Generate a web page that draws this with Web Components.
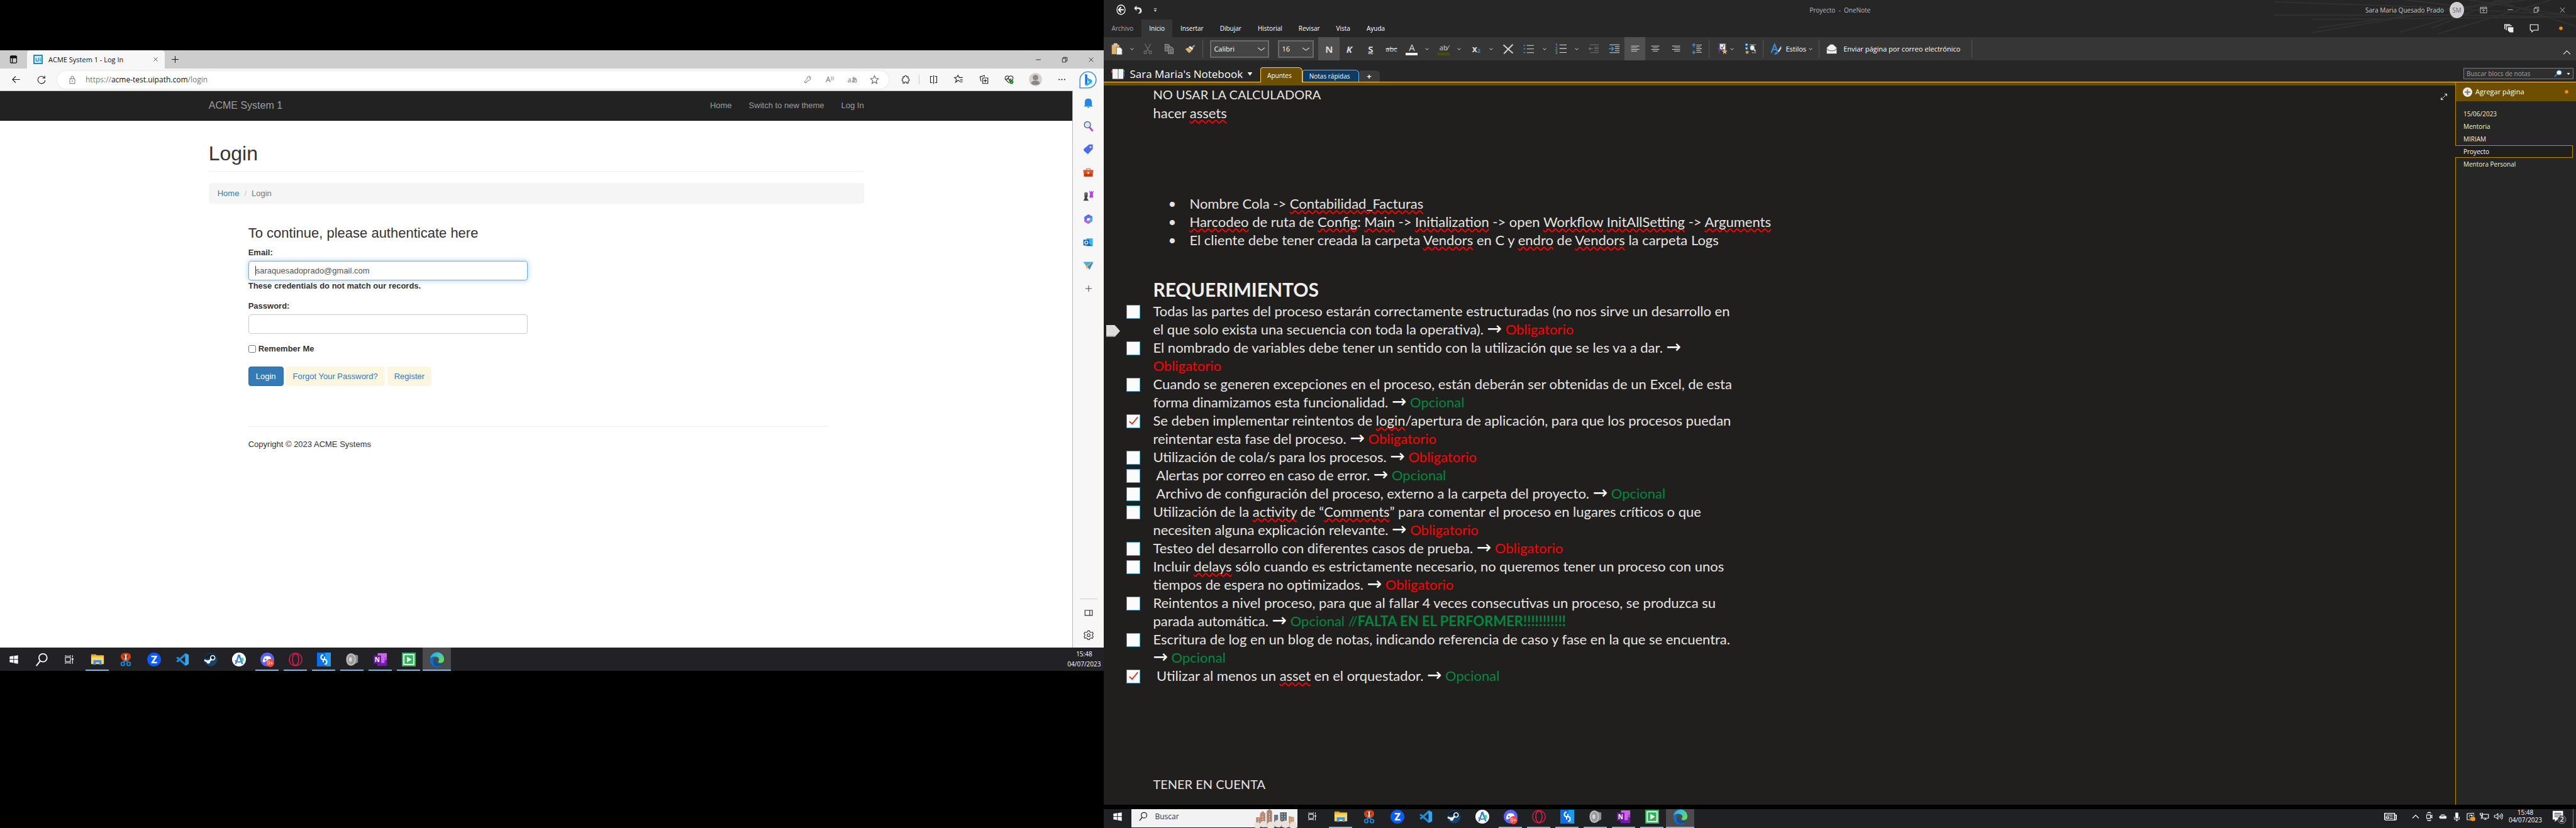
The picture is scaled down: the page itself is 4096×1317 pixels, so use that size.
<!DOCTYPE html>
<html lang="es">
<head>
<meta charset="utf-8">
<title>Escritorio</title>
<style>
  html, body { margin: 0; height: 100%; background: #000; }
  body { font-family: "Open Sans", "Noto Sans", sans-serif; overflow: hidden; }
</style>
</head>
<body>
<dual-desktop></dual-desktop>
<script>
const BASE = `
  *, *::before, *::after { box-sizing: border-box; }
  button { font: inherit; color: inherit; background: none; border: 0; padding: 0; margin: 0; display: flex; align-items: center; justify-content: center; }
  a { color: inherit; text-decoration: none; }
  p, h1, h2, h3, ul, ol { margin: 0; padding: 0; font-weight: inherit; list-style: none; }
`;
function define(name, css, html) {
  const t = document.createElement('template');
  t.innerHTML = '<style>' + BASE + css + '</style>' + html;
  customElements.define(name, class extends HTMLElement {
    constructor() { super(); this.attachShadow({ mode: 'open' }).append(t.content.cloneNode(true)); }
  });
}

/* ---------- icons ---------- */
const st = (d, w = 1.6, x = '') => `<path d="${d}" fill="none" stroke="currentColor" stroke-width="${w}" ${x}/>`;
const BLUE = '#3a86d8';
const ICONS = {
  workspaces: st('M4 6a3 3 0 0 1 3-3h10a3 3 0 0 1 3 3v12a3 3 0 0 1-3 3H7a3 3 0 0 1-3-3zM9 8v13M4 8h16', 2) + '<path d="M4 3h16v5H4z" fill="currentColor"/>',
  close: st('M4 4l16 16M20 4L4 20', 1.8),
  plus: st('M12 2v20M2 12h20', 1.8),
  back: st('M22 12H3M11 4l-8 8 8 8', 1.8),
  reload: st('M20 6a10 10 0 1 0 2 7M21 1v6h-6', 1.9),
  lock: st('M4 9h16v13H4zM8 9V6a4 4 0 0 1 8 0v3', 1.7) + '<circle cx="12" cy="15.500" r="1.600" fill="currentColor"/>',
  key: st('M15 2a6.500 6.500 0 0 1 2 12l-5 1-2 3H8v3H3v-4l7-7a6.500 6.500 0 0 1 5-8z', 1.6) + '<circle cx="17" cy="7" r="1.500" fill="currentColor"/>',
  star: st('M12 2l3 7 7 .700-5.500 5 1.800 7.300-6.300-4-6.300 4L7.500 14.700 2 9.700 9 9z', 1.7),
  puzzle: st('M5 5h4a3 3 0 0 1 6 0h4v5a3 3 0 0 1 0 6v5h-4a3 3 0 0 0-6 0H5v-5a3 3 0 0 1 0-6z', 1.9),
  split: st('M9 4H4v16h5M15 4h5v16h-5M12 1v22', 1.8),
  favs: st('M15 17l-5-3-6 5 2-8-5-4 6-1 3-5 3 6h9M15 13h7M15 18h7', 1.8),
  collections: st('M9 8h13v14H9zM15.500 11v8M11.500 15h8M5 17L2 5l11-3 1 3', 1.8),
  heart: st('M12 21L3 12a5.500 5.500 0 0 1 9-7 5.500 5.500 0 0 1 9 7l-2 2M3 11h5l2-4 3 8 2-4h3', 1.8) + '<circle cx="18" cy="18" r="5" fill="#107c10"/><path d="M16 18l2 2 3-4" stroke="#fff" fill="none"/>',
  avatar: '<circle cx="12" cy="12" r="12" fill="#d5d2ce"/><circle cx="12" cy="8.500" r="5" fill="#8a8886"/><path d="M4 19a8 5 0 0 1 16 0 12 12 0 0 1-16 0z" fill="#8a8886"/>',
  dots: '<g fill="currentColor"><circle cx="4" cy="12" r="2"/><circle cx="12" cy="12" r="2"/><circle cx="20" cy="12" r="2"/></g>',
  bing: '<path d="M1 23V12A11 11 0 1 1 12 23z" fill="#fff" stroke="#2f7fe8" stroke-width="1.200"/><path d="M8 4l3 1v12l-3 2z" fill="#1b6fe8"/><path d="M11 9l6 3q2 3-1 5l-5 3q-2 0-3-1l6-4-2-1z" fill="#25b0ee"/>',
  minimize: st('M3 12h18', 2),
  restore: st('M3 7h13v14H3zM7 7V3h14v14h-5', 2),
  bell: '<path d="M12 1c6 0 8 4 8 9v7l2 2H2l2-2v-7c0-5 2-9 8-9z" fill="#1f8ae8"/><path d="M9 20h6l-3 3z" fill="#777"/>',
  lens: '<path d="M14 14l7 8" stroke="#c13ae0" stroke-width="4" stroke-linecap="round"/><circle cx="10" cy="9" r="7" fill="#cfe8fb" stroke="#666" stroke-width="2"/>',
  tag: '<path d="M14 1h8v10L11 23 2 15q-1-2 0-4z" fill="#4a6cf5"/><circle cx="17" cy="7" r="2.500" fill="#ffd14a"/>',
  toolbox: '<path d="M8 6V3h8v3" stroke="#999" stroke-width="2" fill="none"/><path d="M1 6h22v7H1z" fill="#e0551f"/><path d="M2 13h20v8H2z" fill="#c23b12"/><path d="M10 10h4v5h-4z" fill="#ddd"/>',
  chess: '<path d="M14 1h2v2h2V1h2v2h2V1h2l-2 7 1 8h-9l2-8z" fill="#b63ff0"/><circle cx="7" cy="8" r="4" fill="#666"/><path d="M3 11h8l-2 6 4 6H1l3-6z" fill="#444"/>',
  office: '<path d="M12 1l9 5v6l-6-3-6 3v5l-6-3V7z" fill="#5a6ef0"/><path d="M21 9v8l-9 6-9-5v-5l7 3 6-3V8z" fill="#b06bd8"/><path d="M16 7l5 3v6l-6 4z" fill="#38b6f0"/><path d="M12 9l3 2v3l-3 2-3-2v-3z" fill="#f7f7f7"/>',
  outlook: '<path d="M8 3h14v17H8z" fill="#35b8f1"/><path d="M8 12l14 8H8z" fill="#1066b8"/><rect x="1" y="6" width="13" height="13" fill="#0a5fb4"/><circle cx="7.500" cy="12.500" r="3.500" fill="none" stroke="#fff" stroke-width="2"/>',
  plane: '<path d="M1 4h22l-9 17-4-7z" fill="#2f9be8"/><path d="M1 4h22L8 14z" fill="#38b0f2"/><path d="M23 4L6 12l3 8 2-6z" fill="#f0a832"/><path d="M11 14L23 4l-8 16z" fill="#2f86e0"/>',
  panel: st('M2 5h20v15H2zM15 5v15', 2),
  gear: st('M10 2h4l1 3 3 1 3-1 2 4-2 2v3l2 2-2 4-3-1-3 1-1 3h-4l-1-3-3-1-3 1-2-4 2-2v-3L1 9l2-4 3 1 3-1z', 1.7) + '<circle cx="12" cy="12.500" r="3.500" fill="none" stroke="currentColor" stroke-width="1.700"/>',
  /* taskbar */
  windows: '<g fill="#fff"><path d="M2 5l9-1.500V11H2zM12.500 3.200L22 2v9h-9.500zM2 12.500h9V20l-9-1.500zM12.500 12.500H22V22l-9.500-1.500z"/></g>',
  search: '<circle cx="14.500" cy="9" r="7" fill="none" stroke="currentColor" stroke-width="2"/><path d="M10 14l-7 9" stroke="currentColor" stroke-width="2.200"/>',
  taskview: st('M3 7h12v10H3zM3 2v2h12V2M3 22v-2h12v2M20 2v5M20 14v8', 1.6) + '<rect x="18" y="9" width="4" height="4" fill="currentColor"/>',
  folder: '<path d="M1 3h8l2 2H1z" fill="#e8a317"/><path d="M1 5h22v15H1z" fill="#ffd667"/><path d="M1 5h22v3H1z" fill="#f5bd3c"/><path d="M5 13h14v8h-4v-4H9v4H5z" fill="#3f93dc"/>',
  snip: '<path d="M11 15C3 13 1 6 6 1c-1 3 3 6 5 9zM13 15c8-2 10-9 5-14 0 3-3 6-5 9z" fill="#d8420f"/><path d="M6 2q6-3 12 0l-2 4H8z" fill="#d8420f"/><path d="M12 3v12" stroke="#ddd" stroke-width="3"/><path d="M12 13l-4 4M12 13l4 4" stroke="#1a8ad8" stroke-width="2"/><circle cx="7" cy="19.500" r="3" fill="none" stroke="#1a8ad8" stroke-width="2"/><circle cx="17" cy="19.500" r="3" fill="none" stroke="#1a8ad8" stroke-width="2"/>',
  zed: '<circle cx="12" cy="12" r="12" fill="#0b5cff"/><text x="12" y="18" text-anchor="middle" font-family="Inter,sans-serif" font-weight="800" font-size="17" fill="#fff">Z</text>',
  vscode: '<path d="M17 1l6 3v16l-6 3L1 9l3-2 13 11V6L4 17l-3-2z" fill="#1f8ad2"/><path d="M17 1l6 3v16l-6 3z" fill="#35a6ee"/>',
  steam: '<circle cx="12" cy="12" r="11.500" fill="#13456e"/><path d="M1 10a11.500 11.500 0 0 1 22 0z" fill="#10202f"/><path d="M1 13l7 3 6-5" stroke="#fff" stroke-width="3" fill="none"/><circle cx="15.500" cy="9" r="3.800" fill="none" stroke="#fff" stroke-width="1.800"/><circle cx="8" cy="16" r="3" fill="#fff"/>',
  studio: '<circle cx="12" cy="12" r="12" fill="#fff"/><path d="M12 4l6 16M12 4L6 20" stroke="#3b7de0" stroke-width="2.600"/><circle cx="12" cy="6" r="2.500" fill="#3b7de0"/><path d="M5 14q7 5 14 0" stroke="#3b7de0" stroke-width="2" fill="none"/><path d="M15 9h5v6l-3 1z" fill="#3ddc84"/>',
  discord: '<circle cx="12" cy="12" r="12" fill="#5865f2"/><path d="M7 7q5-2 10 0 3 5 2 9l-3 1-2-2H9l-2 2-3-1q0-5 3-9z" fill="#fff"/><circle cx="9" cy="12" r="1.700" fill="#5865f2"/><circle cx="17" cy="18" r="7" fill="#f04747"/><text x="17" y="21.500" text-anchor="middle" font-family="Open Sans,sans-serif" font-size="9" fill="#fff">9+</text>',
  opera: '<ellipse cx="12" cy="12" rx="11" ry="11" fill="none" stroke="#e0194b" stroke-width="1.500"/><ellipse cx="12" cy="12" rx="5.500" ry="10" fill="none" stroke="#e0194b" stroke-width="1.800"/>',
  sapp: '<rect width="24" height="24" fill="#0a6fe8"/><path d="M14 0h10v24h-8z" fill="#1a9af0"/><path d="M11 4q-4 0-4 4t4 4v5M13 20q4 0 4-4t-4-4V7" stroke="#fff" stroke-width="2.200" fill="none"/>',
  speaker: '<path d="M14 3l8 2v12l-8 4z" fill="#8d8d8d"/><ellipse cx="10" cy="12" rx="8.500" ry="11" fill="#bcbcbc"/><ellipse cx="10" cy="12" rx="6" ry="8.500" fill="#9a9a9a"/><ellipse cx="9" cy="12" rx="2.500" ry="4" fill="#d8d8d8"/>',
  onenote: '<path d="M7 1h16v22H7z" fill="#ca64ea"/><path d="M19 8h4v5h-4z" fill="#ae4bd5"/><path d="M19 13h4v10H7v-5h12z" fill="#7719aa"/><rect y="5" width="13" height="14" fill="#6b1a9c"/><text x="6.500" y="16" text-anchor="middle" font-family="Open Sans,sans-serif" font-weight="700" font-size="11" fill="#fff">N</text>',
  green: '<rect width="24" height="24" fill="#2fb457"/><rect x="3.500" y="3.500" width="17" height="17" fill="none" stroke="#fff" stroke-width="2"/><path d="M9 7l8 5-8 5z" fill="#fff"/>',
  edge: '<defs><linearGradient id="g" x1="0" y1="0" x2="1" y2=".6"><stop offset="0" stop-color="#2b9fe6"/><stop offset=".5" stop-color="#36c3d8"/><stop offset="1" stop-color="#63dc5a"/></linearGradient></defs><path d="M0 11A12 12 0 0 1 24 12c0 4-3 6-6 6-3 0-4-1-4-2 0-1 1.500-2 1.500-4 0-3-3-5-7-5C4 7 1 8.500 0 11z" fill="url(#g)"/><path d="M8.500 7C4 9 4 16 8 20c3 3 8 4 12 2A12 12 0 0 1 0 11c1-2.500 4-4 8.500-4z" fill="#0f6fc6"/><path d="M10 12c-3 4 0 8 5 8 3 0 6-1 7.500-3-2 5-7 7.500-11.500 7-6-2-8-9-1-12z" fill="#0c4f9e"/>',
  news: st('M2 4h17v16H4a2 2 0 0 1-2-2zM19 8h3v10q0 2-3 2M5 8h11M11 12h5M11 16h5', 1.8) + '<path d="M5 12h4v4H5z" fill="none" stroke="currentColor" stroke-width="1.800"/>',
  caretUp: st('M2 17L12 7l10 10', 2.2),
  caretDown: st('M2 7l10 10L22 7', 2.4),
  chev: st('M2 7l10 10L22 7', 4),
  meet: st('M3 8h12v9H3zM15 12l5-3v7l-5-3M5 4q6-4 12 0M5 21q6 4 12 0', 2),
  cloud: '<path d="M5 19a5 5 0 0 1 0-9 7 7 0 0 1 13 0 5 5 0 0 1 1 9z" fill="#e8e8e8"/><path d="M5 10a7 7 0 0 1 13 0L9 14z" fill="#8f8f8f"/>',
  mic: '<rect x="7" y="1" width="10" height="15" fill="#fff"/>' + st('M3 12v7h18v-7M12 19v4M8 23h8', 1.8),
  sync: st('M20 2L3 4v16l13 1M8 12a4 4 0 0 1 7-3M16 7v3h-3M15 13a4 4 0 0 1-6 2', 1.8) + '<path d="M20 2v10" stroke="currentColor"/><circle cx="18" cy="18" r="6" fill="#ff9800"/>',
  net: st('M7 6h15v11H7zM14 17v4M10 21h8M1 3h6v5H1zM4 8v12', 1.8),
  sound: st('M2 9h4l5-5v16l-5-5H2zM14 9q2 3 0 6M17 6q4 6 0 12M20 3q6 9 0 18', 1.7),
  notif: '<path d="M1 2h18v15H9l-4 4v-4H1z" fill="#fff"/><path d="M4 6h12M4 9h12M4 12h7" stroke="#222" stroke-width="1.200"/><circle cx="17" cy="17" r="7" fill="#3a3a3a" stroke="#8a8a8a"/><text x="17" y="21" text-anchor="middle" font-family="Open Sans,sans-serif" font-weight="600" font-size="11" fill="#fff">2</text>',
  skyline: '<g><path d="M4 30V14h6V8l4-4 4 4v22z" fill="#b98a78"/><path d="M20 30V4l4-3 4 3v26z" fill="#a88378"/><path d="M31 30V10h6v20z" fill="#6b7683"/><path d="M40 30V6h10v24z" fill="#5f6873"/><path d="M53 30V12l8 2v16z" fill="#c49a6a"/><g stroke="#e8d9c8" stroke-width="1" stroke-dasharray="2 2"><path d="M8 30V12M14 30V9M24 30V6M43 30V8M47 30V8M56 30V16M59 30V16"/></g><g fill="#e9e2dc"><circle cx="6" cy="27" r="5"/><circle cx="15" cy="25" r="5"/><circle cx="26" cy="27" r="6"/><circle cx="37" cy="24" r="6"/><circle cx="48" cy="25" r="6"/><circle cx="60" cy="27" r="6"/></g></g>',
  /* OneNote */
  circleBack: '<circle cx="12" cy="12" r="10.500" fill="none" stroke="#fff" stroke-width="2"/><path d="M19 12H7M12 6l-6 6 6 6" stroke="#fff" stroke-width="3" fill="none"/>',
  undo: '<path d="M9 1L2 8l7 7V10h4q6 0 5 6-1 4-6 6 12 0 11-8-1-8-9-8H9z" fill="#e8e8e8"/>',
  qat: '<path d="M3 4h18v3H3zM3 11h18l-9 9z" fill="#ddd"/>',
  ribbonOpts: st('M2 3h20v18H2zM2 7h20M12 19V10M8 14l4-4 4 4', 1.7),
  pages: '<path d="M9 9h14v14h-9l-5-5z" fill="#eee"/>' + st('M1 14V2h14M5 17V5h14', 2),
  comment: st('M2 2h20v15H11l-5 5v-5H2z', 1.7),
  expand: st('M14 3h7v7M21 3L3 21M3 14v7h7', 2),
  paste: '<path d="M1 4h16v19H1z" fill="#dfb26b"/><path d="M5 1h8v5H5z" fill="#c9c9c9"/><path d="M11 9h8l4 4v11H11z" fill="#f2f2f2" stroke="#555"/>',
  cut: '<g fill="none" stroke="#6a6a6a" stroke-width="2"><path d="M5 1l10 16M19 1L9 17"/><circle cx="6" cy="20" r="3"/><circle cx="18" cy="20" r="3"/></g>',
  copy: '<g fill="#5c5c5c" stroke="#9a9a9a" stroke-width="1.500"><path d="M2 2h8l3 3v12H2z"/><path d="M10 8h8l4 4v11H10z"/></g><path d="M4 7h6M4 10h5M13 14h6M13 17h6M13 20h6" stroke="#9a9a9a"/>',
  painter: '<path d="M1 12l6-4 9 8-6 7q-4-4-9-11z" fill="#e0b36c"/><path d="M8 7l4-3 7 7-3 4z" fill="#efefef"/><path d="M15 7l6-6 2 2-5 6z" fill="#aaa"/>',
  clear: '<path d="M2 2l20 20M22 1L3 23" stroke="#cfcfcf" stroke-width="3"/>',
  bullets: '<g fill="#3a86d8"><rect x="1" y="2" width="3" height="3"/><rect x="1" y="10" width="3" height="3"/><rect x="1" y="19" width="3" height="3"/></g>' + st('M8 3.500h16M8 11.500h16M8 20.500h16', 1.6),
  numbers: `<g fill="${BLUE}" font-family="Open Sans" font-weight="700" font-size="9"><text x="0" y="7">1</text><text x="0" y="15.500">2</text><text x="0" y="24">3</text></g>` + st('M9 3.500h15M9 11.500h15M9 20.500h15', 1.6),
  outdent: '<g stroke="#777" stroke-width="1.600" fill="none"><path d="M4 2h20M14 8h10M14 12h10M14 17h10M4 22h20M11 12H2M6 8l-4 4 4 4"/></g>',
  indent: st('M2 2h22M14 7h10M14 12h10M14 17h10M2 22h22', 1.6) + `<path d="M0 12h10M6 7l5 5-5 5" stroke="${BLUE}" stroke-width="2.400" fill="none"/>`,
  alignL: st('M1 4h22M1 9h16M1 14h22M1 19h16', 1.8),
  alignC: st('M1 4h22M5 9h14M1 14h22M5 19h14', 1.8),
  alignR: st('M1 4h22M7 9h16M1 14h22M7 19h16', 1.8),
  spacing: st('M11 4h13M11 8h10M11 12h13M11 16h10M11 20h13', 1.5) + `<path d="M5 1v8M5 15v8M1 5l4-4 4 4M1 19l4 4 4-4" stroke="${BLUE}" stroke-width="2.200" fill="none"/>`,
  tags: `<rect x="5" y="1" width="14" height="13" fill="#fff" stroke="${BLUE}" stroke-width="2"/><path d="M8 7l3 4 5-8" stroke="#d8401c" stroke-width="2.200" fill="none"/><path d="M1 13q4-3 5 0t-2 4v2M4 21v2" stroke="#7a3fa0" stroke-width="2.200" fill="none"/><path d="M17 12l2 4 5 .500-4 3 1 4.500-4-2.500-4 2.500 1-4.500-4-3 5-.500z" fill="#e0b36c"/>`,
  find: `<g fill="#fff" stroke="${BLUE}" stroke-width="1.500"><rect x="1" y="1" width="4" height="4"/><rect x="1" y="9" width="4" height="4"/></g><path d="M9 3h14M14 21h9" stroke="#999" stroke-width="1.500"/><ellipse cx="15" cy="10" rx="4.500" ry="5.500" fill="#eee" stroke="#aaa"/><path d="M18 13l4 5" stroke="#ccc" stroke-width="3"/><path d="M4 15l1 3 4 .500-3 2 1 3.500-3-2-3 2 1-3.500-2-2 3-.500z" fill="#e0b36c"/>`,
  styles: `<path d="M2 20L9 2l6 15M5 13h8" stroke="${BLUE}" stroke-width="3" fill="none"/><path d="M23 5v6l-5 8-3-2z" fill="#ccc"/><path d="M8 24q1-6 6-6l3 2q-2 4-9 4z" fill="#2f8ae0"/>`,
  mail: '<path d="M1 9l8-8h6l8 8v14H1z" fill="#f0f0f0"/><path d="M1 11q3 5 6 5h10q3 0 6-5" stroke="#555" stroke-width="1.500" fill="none"/>',
  notebook: '<path d="M0 4h5v5H0z" fill="#d8502a"/><path d="M2 1h9l1 1 1-1h8v21h-8l-1 1-1-1H2z" fill="#f4f4f4"/><path d="M12 2v21" stroke="#555"/><path d="M21 3h2v5h-2z" fill="#3fa06a"/><path d="M21 9h2v8h-2z" fill="#3a6fb0"/>',
  tri: '<path d="M2 5h20L12 20z" fill="currentColor"/>',
  magnify: '<path d="M10 13l-8 9" stroke="#3f78b8" stroke-width="4"/><circle cx="15" cy="9" r="7" fill="#fff" stroke="#5a9be0" stroke-width="2"/>',
  addPage: '<circle cx="12" cy="12" r="12" fill="#f0ece4"/><path d="M12 5v14M5 12h14" stroke="#777" stroke-width="3"/>',
  dot: '<circle cx="12" cy="12" r="11" fill="#f79400"/>',
  handle: '<path d="M0 0h14l9 12-9 12H0z" fill="#dcdcdc"/><path d="M0 22h14v2H0z" fill="#888"/>'
};
customElements.define('ui-icon', class extends HTMLElement {
  constructor() { super(); this.attachShadow({ mode: 'open' }); }
  connectedCallback() {
    const w = this.getAttribute('w') || 16, h = this.getAttribute('h') || w, n = this.getAttribute('name');
    const vb = n === 'skyline' ? '0 0 66 30' : '0 0 24 24';
    this.shadowRoot.innerHTML = `<style>:host{display:block;flex:none;width:${w}px;height:${h}px}svg{display:block;overflow:visible}</style>
      <svg width="${w}" height="${h}" viewBox="${vb}" preserveAspectRatio="none" aria-hidden="true">${ICONS[n] || ''}</svg>`;
  }
});
const ic = (n, w, h) => `<ui-icon name="${n}" w="${w}" h="${h || w}"></ui-icon>`;
const btn = (n, w, h, ml = 0) => `<button type="button" aria-label="${n}"${ml ? ` style="margin-left:${ml}px"` : ''}>${ic(n, w, h)}</button>`;

/* ---------- Edge ---------- */
define('edge-tabs', `
  :host { display: flex; height: 29px; background: #cdcdcd; align-items: stretch; color: #111; font-size: 11px; }
  .ws { width: 43px; border-radius: 0 0 4px 0; }
  .tab { display: flex; align-items: center; width: 219px; padding: 0 10px; background: #f7f7f7; border-radius: 5px 5px 0 0; white-space: nowrap; }
  .fav { display: flex; align-items: center; justify-content: center; width: 15px; height: 15px; margin-right: 9px; border: 2px solid #1a8bd0; color: #1a8bd0; background: #dff1fb; font: 700 9px/11px "Open Sans", sans-serif; }
  .tab button { margin-left: auto; }
  .win { margin-left: auto; display: flex; gap: 32px; padding-right: 15px; }
`, `<button class="ws" type="button" aria-label="Espacios">${ic('workspaces', 15)}</button>
  <div class="tab"><span class="fav">Ui</span><span>ACME System 1 - Log In</span>${btn('close', 9)}</div>
  ${btn('plus', 13, 13, 10)}
  <div class="win">${btn('minimize', 10)}${btn('restore', 10)}${btn('close', 10)}</div>`);

define('edge-toolbar', `
  :host { display: flex; align-items: center; height: 35px; padding: 0 11px 0 18px; background: #f7f7f7; color: #222; }
  .pill { flex: 1; display: flex; align-items: center; height: 28px; margin-left: 18px; padding: 0 15px 0 18px; border-radius: 14px; background: #fff; box-shadow: 0 0 3px #ddd; color: #666; }
  .url { flex: 1; margin-left: 15px; font-size: 12px; color: #767676; }
  .url b { font-weight: 400; color: #111; }
  .ab { margin-left: 22px; font-size: 12px; }
  i { width: 1px; height: 15px; margin-left: 14px; background: #ccc; }
`, `${btn('back', 15)}${btn('reload', 14, 14, 26)}
  <div class="pill">${ic('lock', 12, 14)}<span class="url">https://<b>acme-test.uipath.com</b>/login</span>
    ${btn('key', 13)}<button class="ab" type="button">A⁾⁾</button><button class="ab" type="button" style="font-family:'Open Sans','Noto Sans CJK JP',sans-serif;font-size:10px">aあ</button>${btn('star', 15, 15, 20)}</div>
  ${btn('puzzle', 14, 15, 20)}<i></i>${btn('split', 15, 15, 15)}${btn('favs', 15, 15, 25)}${btn('collections', 15, 15, 25)}${btn('heart', 15, 15, 25)}${btn('avatar', 21, 21, 24)}${btn('dots', 13, 13, 25)}${btn('bing', 28, 28, 21)}`);

define('edge-sidebar', `
  :host { display: flex; flex-direction: column; width: 50px; background: #f7f7f7; border-left: 1px solid #bbb; color: #333; align-items: center; padding: 10px 0; }
  .apps { display: flex; flex-direction: column; justify-content: space-between; height: 315px; align-items: center; }
  .apps button, .end button { height: 20px; }
  .end { margin-top: auto; width: 28px; border-top: 1px solid #ccc; padding-top: 11px; display: flex; flex-direction: column; gap: 16px; align-items: center; }
`, `<div class="apps">${['bell', 'lens', 'tag', 'toolbox', 'chess', 'office', 'outlook', 'plane'].map(n => btn(n, 17)).join('')}${btn('plus', 12)}</div>
  <div class="end">${btn('panel', 14, 13)}${btn('gear', 16)}</div>`);

define('acme-nav', `
  :host { display: flex; height: 47px; background: #222; border-bottom: 1px solid #080808; justify-content: center; font: 13px/20px "Liberation Sans", Arial, sans-serif; color: #9d9d9d; }
  nav { display: flex; width: 1042px; align-items: center; gap: 27px; }
  .brand { font-size: 16px; margin-right: auto; }
`, `<nav><a class="brand" href="#">ACME System 1</a><a href="#">Home</a><a href="#">Switch to new theme</a><a href="#">Log In</a></nav>`);

define('login-page', `
  :host { display: block; width: 1042px; margin: 0 auto; font: 13px/18px "Liberation Sans", Arial, sans-serif; color: #333; }
  h1 { font-size: 32px; line-height: 36px; padding: 34px 0 10px; border-bottom: 1px solid #eee; }
  .crumbs { display: flex; gap: 8px; margin-top: 18px; height: 33px; align-items: center; padding: 0 14px; background: #f5f5f5; border-radius: 4px; color: #777; }
  .crumbs i { color: #ccc; font-style: normal; }
  a { color: #337ab7; }
  form { margin: 34px 0 0 63px; width: 444px; }
  h3 { font-size: 22px; line-height: 26px; margin-bottom: 9px; }
  label { display: block; font-weight: 700; }
  input.t { display: block; width: 100%; height: 31px; margin-top: 4px; padding: 0 11px; border: 1px solid #ccc; border-radius: 4px; font: inherit; color: #555; outline: 0; background: #fff; }
  input.on { border-color: #66afe9; box-shadow: 0 0 8px #66afe999; background: linear-gradient(#333, #333) no-repeat 10px 7px / 1px 15px, #fff; }
  .err { font-weight: 700; margin-bottom: 14px; }
  .rem { display: flex; align-items: center; gap: 4px; margin: 15px 0 19px; }
  .rem input { width: 12px; height: 12px; margin: 0; }
  .row { display: flex; gap: 4px; }
  .row > * { height: 31px; padding: 0 11px; display: flex; align-items: center; border-radius: 4px; background: #fcf6e0; white-space: nowrap; }
  .row button { background: #337ab7; border: 1px solid #2e6da4; color: #fff; }
  footer { margin: 64px 57px 0 63px; padding-top: 15px; border-top: 1px solid #eee; line-height: 26px; }
`, `<h1>Login</h1>
  <div class="crumbs"><a href="#">Home</a><i>/</i><span>Login</span></div>
  <form><h3>To continue, please authenticate here</h3>
    <label for="e">Email:</label><input class="t on" id="e" type="text" value="saraquesadoprado@gmail.com">
    <p class="err">These credentials do not match our records.</p>
    <label for="p">Password:</label><input class="t" id="p" type="password">
    <label class="rem"><input type="checkbox">Remember Me</label>
    <div class="row"><button type="button">Login</button><a href="#">Forgot Your Password?</a><a href="#">Register</a></div>
  </form>
  <footer>Copyright © 2023 ACME Systems</footer>`);

define('edge-window', `
  :host { display: flex; flex-direction: column; flex: 1; background: #fff; min-height: 0; }
  .body { display: flex; flex: 1; min-height: 0; }
  main { flex: 1; border-top: 1px solid #bbb; }
`, `<edge-tabs></edge-tabs><edge-toolbar></edge-toolbar>
  <div class="body"><main><acme-nav></acme-nav><login-page></login-page></main><edge-sidebar></edge-sidebar></div>`);

/* ---------- taskbar ---------- */
const APPS = ['folder', 'snip', 'zed', 'vscode', 'steam', 'studio', 'discord', 'opera', 'sapp', 'speaker', 'onenote', 'green', 'edge'];
const OPEN = ['folder', 'discord', 'opera', 'sapp', 'speaker', 'onenote', 'green', 'edge'];
define('task-apps', `
  :host { display: flex; height: 37px; }
  button { position: relative; width: 45px; height: 37px; }
  .open::after { content: ""; position: absolute; left: 4px; right: 4px; bottom: 0; height: 2px; background: #76b9ed; }
  .edge { background: #4b4b4e; }
  .edge::after { left: 0; right: 0; }
`, APPS.map(n => `<button type="button" aria-label="${n}" class="${OPEN.includes(n) ? 'open ' : ''}${n === 'edge' ? 'edge' : ''}">${ic(n, 22)}</button>`).join(''));
define('task-clock', `
  :host { display: flex; flex-direction: column; align-items: center; gap: var(--clock-gap, 5px); font-size: 10px; line-height: 11px; color: #fff; }
`, `<span>15:48</span><span>04/07/2023</span>`);
define('left-taskbar', `
  :host { display: flex; align-items: center; height: 37px; background: #222126; color: #fff; }
  button { width: 44px; height: 37px; }
  task-clock { margin-left: auto; padding-right: 5px; }
`, `<button type="button" aria-label="Inicio">${ic('windows', 16)}</button><button type="button" aria-label="Buscar">${ic('search', 22)}</button><button type="button" aria-label="Vista de tareas">${ic('taskview', 16)}</button>
  <task-apps></task-apps><task-clock></task-clock>`);
define('right-taskbar', `
  :host { display: flex; align-items: flex-end; height: 30px; overflow: hidden; background: #1f2124; color: #fff; }
  .bar { display: flex; flex: 1; align-items: center; height: 37px; flex-wrap: nowrap; }
  .start { width: 44px; }
  .box { display: flex; align-items: center; width: 264px; height: 35px; background: #f2f2f2; color: #222; padding: 0 0 0 11px; gap: 11px; }
  input { flex: 1; min-width: 0; border: 0; background: none; font: 12px/16px "Open Sans", sans-serif; color: #333; padding: 0; outline: 0; }
  input::placeholder { color: #333; opacity: 1; }
  .box ui-icon:last-child { align-self: flex-end; }
  .tv { width: 46px; }
  .tray { display: flex; align-items: center; margin-left: auto; padding-right: 4px; }
  .tray i { width: 1px; height: 37px; background: #777; margin-left: 11px; }
  task-clock { --clock-gap: 1px; margin: 0 16px 0 9px; }
`, `<div class="bar"><button class="start" type="button" aria-label="Inicio">${ic('windows', 16, 16)}</button>
  <div class="box">${ic('search', 15)}<input type="text" aria-label="Buscar" placeholder="Buscar">${ic('skyline', 70, 30)}</div>
  <button class="tv" type="button" aria-label="Vista de tareas">${ic('taskview', 15)}</button><task-apps></task-apps>
  <div class="tray">${btn('news', 22, 16)}${btn('caretUp', 12, 12, 23)}${btn('meet', 12, 15, 10)}${btn('cloud', 15, 13, 8)}${btn('mic', 11, 14, 9)}${btn('sync', 15, 14, 9)}${btn('net', 15, 13, 7)}${btn('sound', 15, 13, 7)}
  <task-clock></task-clock>${btn('notif', 22, 22)}<i></i></div></div>`);

/* ---------- OneNote ---------- */
define('onenote-title', `
  :host { display: grid; grid-template-columns: 1fr auto 1fr; height: 31px; align-items: center; color: #b8b8b8; font-size: 10px; }
  .name { font-size: 10px; white-space: pre; }
  .l, .r { display: flex; align-items: center; }
  .l { padding-left: 20px; }
  .r { justify-content: flex-end; padding-right: 16px; color: #ccc; }
  .av { display: flex; align-items: center; justify-content: center; width: 23px; height: 26px; margin-left: 9px; border-radius: 50%; background: #d2d0ce; color: #666; font-size: 10px; }
`, `<div class="l">${btn('circleBack', 15, 17)}${btn('undo', 14, 15, 12)}${btn('qat', 6, 8, 18)}</div>
<span class="name">Proyecto  -  OneNote</span>
<div class="r"><span>Sara Maria Quesado Prado</span><span class="av">SM</span>${btn('ribbonOpts', 12, 12, 25)}${btn('minimize', 11, 11, 31)}${btn('restore', 10, 11, 31)}${btn('close', 11, 12, 31)}</div>`);

define('onenote-tabs', `
  :host { display: flex; height: 28px; color: #fff; font-size: 10px; }
  button { padding: 0 13px; height: 28px; }
  .file { color: #a6a6a6; padding: 0 13px 0 12px; }
  .on { background: #363636; padding: 0 12px; }
  .r { margin-left: auto; display: flex; padding-right: 21px; }
  .r button { padding: 0; }
`, `<button class="file" type="button">Archivo</button><button class="on" type="button">Inicio</button>${['Insertar', 'Dibujar', 'Historial', 'Revisar', 'Vista', 'Ayuda'].map(t => `<button type="button">${t}</button>`).join('')}
<div class="r">${btn('pages', 15, 14)}${btn('comment', 15, 14, 25)}${btn('dot', 6, 6, 32)}</div>`);

const g = (px, html, label = '') => `<button type="button" aria-label="${label}" style="margin-left:${px}px">${html}</button>`;
const chev = px => g(px, ic('chev', 6, 6), 'Más');
define('onenote-ribbon', `
  :host { display: flex; align-items: center; height: 37px; background: #363636; color: #d8d8d8; font-size: 11px; white-space: nowrap; }
  i { width: 1px; height: 29px; background: #555; }
  .box { display: flex; align-items: center; height: 28px; border: 2px solid #6a6a6a; background: #444; padding: 0 4px; }
  select { flex: 1; min-width: 0; appearance: none; border: 0; background: none; color: #fff; font: 11px/16px "Open Sans", sans-serif; padding: 0; outline: 0; }
  .on { background: #505050; height: 37px; }
  .t { width: 14px; font-weight: 700; font-size: 15px; }
  .st { width: 20px; font-size: 11px; text-decoration: line-through; }
  .fc, .hl { flex-direction: column; width: 19px; font-size: 15px; line-height: 15px; }
  .fc::after, .hl::after { content: ""; width: 19px; height: 4px; background: #eee; margin-top: 1px; }
  .hl { font-size: 11px; } .hl::after { background: #4d4d00; }
  .sb { width: 16px; font-weight: 700; font-size: 14px; }
  sub { font-size: 9px; color: #3a86d8; align-self: flex-end; }
  .col { margin-left: auto; padding: 12px 8px 0 0; }
  .w { color: #fff; }
`, `${g(12, ic('paste', 18, 19), 'Pegar')}${chev(12)}${g(14, ic('cut', 16, 17), 'Cortar')}${g(18, ic('copy', 16, 17), 'Copiar')}${g(17, ic('painter', 17, 14), 'Copiar formato')}
<i style="margin-left:11px"></i>
<span class="box" style="margin-left:11px;width:94px"><select aria-label="Fuente"><option>Calibri</option></select>${ic('caretDown', 13, 10)}</span>
<span class="box" style="margin-left:14px;width:57px"><select aria-label="Tamaño"><option>16</option></select>${ic('caretDown', 13, 10)}</span>
<button class="t on" type="button" style="margin-left:7px;width:34px">N</button>
<button class="t" type="button" style="margin-left:8px;font-style:italic">K</button>
<button class="t" type="button" style="margin-left:20px;text-decoration:underline">S</button>
<button class="st" type="button" style="margin-left:16px">abc</button>
<button class="fc" type="button" style="margin-left:13px">A</button>${chev(12)}
<button class="hl" type="button" style="margin-left:14px">ab⁄</button>${chev(12)}
<button class="sb" type="button" style="margin-left:16px">x<sub>2</sub></button>${chev(13)}
${g(15, ic('clear', 18, 16), 'Borrar formato')}${g(15, ic('bullets', 17, 16), 'Viñetas')}${chev(14)}${g(14, ic('numbers', 18, 17), 'Numeración')}${chev(13)}
${g(15, ic('outdent', 17, 15), 'Reducir sangría')}${g(16, ic('indent', 17, 15), 'Aumentar sangría')}
<button class="on" type="button" aria-label="Izquierda" style="margin-left:8px;width:33px">${ic('alignL', 14, 13)}</button>${g(9, ic('alignC', 14, 13), 'Centrar')}${g(19, ic('alignR', 14, 13), 'Derecha')}${g(18, ic('spacing', 16, 17), 'Espaciado')}
<i style="margin-left:11px"></i>${g(13, ic('tags', 16, 17), 'Etiquetas')}${chev(4)}${g(18, ic('find', 18, 17), 'Buscar etiquetas')}
<i style="margin-left:10px"></i>${g(11, ic('styles', 18, 18), 'Estilos')}<button class="w" type="button" style="margin-left:6px">Estilos</button>${chev(4)}
<i style="margin-left:10px"></i>${g(11, ic('mail', 17, 16), 'Correo')}<button class="w" type="button" style="margin-left:10px">Enviar página por correo electrónico</button>
<i style="margin-left:18px"></i><button class="col" type="button" aria-label="Contraer">${ic('caretUp', 13, 13)}</button>`);

define('section-bar', `
  :host { display: flex; align-items: flex-end; box-sizing: border-box; height: 40px; border-bottom: 5px solid #6e4e00; box-shadow: inset 0 -1px #ffcf5e; color: #fff; font-size: 10px; white-space: nowrap; }
  .nb { display: flex; align-items: center; height: 27px; padding: 0 0 0 12px; font-size: 17px; gap: 7px; }
  .tab { height: 24px; border: 1px solid #ffcf5e; border-bottom: 0; border-radius: 4px 6px 0 0; background: #6e4e00; padding: 0 16px 0 10px; margin-left: 12px; }
  .t2 { height: 19px; border-color: #6ab0ee; background: #113a60; margin: 0 0 1px 0; padding: 0 13px 0 10px; }
  .t3 { height: 18px; border: 0; background: #3a3a3a; margin: 0 0 1px 0; width: 33px; padding: 0; font-weight: 700; font-size: 13px; }
  .find { display: flex; align-items: center; margin: 0 4px 5px auto; width: 175px; height: 18px; border: 1px solid #777; background: #2f2f2f; padding: 0 4px; gap: 7px; }
  input { flex: 1; min-width: 0; border: 0; padding: 0; background: none; color: #a0a0a0; font: 10px/14px "Open Sans", sans-serif; outline: 0; }
  input::placeholder { color: #a0a0a0; opacity: 1; }
`, `<div class="nb">${ic('notebook', 22, 18)}<span>Sara Maria's Notebook</span>${ic('tri', 9, 9)}</div>
<button class="tab" type="button">Apuntes</button><button class="tab t2" type="button">Notas rápidas</button><button class="tab t3" type="button">+</button>
<div class="find"><input type="text" aria-label="Buscar blocs de notas" placeholder="Buscar blocs de notas">${ic('magnify', 13, 12)}${ic('tri', 6, 5)}</div>`);

customElements.define('note-task', class extends HTMLElement {
  constructor() {
    super();
    this.attachShadow({ mode: 'open' }).innerHTML = `<style>${BASE}
      :host { display: block; }
      label { display: flex; gap: 20px; align-items: flex-start; }
      input { appearance: none; flex: none; width: 22px; height: 22px; margin: 5px 0 0; border: 1px solid #4f9fc0; background: #fbfbfb; display: flex; justify-content: center; }
      input:checked::after { content: ""; width: 7px; height: 15px; border: solid #d8382c; border-width: 0 2px 2px 0; transform: rotate(40deg); }
    </style><label><input type="checkbox"${this.hasAttribute('done') ? ' checked' : ''}><span><slot></slot></span></label>`;
  }
});

const TASKS = [
  [0, 'Todas las partes del proceso estarán correctamente estructuradas (no nos sirve un desarrollo en<br>el que solo exista una secuencia con toda la operativa). {a} {O}'],
  [0, 'El nombrado de variables debe tener un sentido con la utilización que se les va a dar. {a}<br>{O}'],
  [0, 'Cuando se generen excepciones en el proceso, están deberán ser obtenidas de un Excel, de esta<br>forma dinamizamos esta funcionalidad. {a} {P}'],
  [1, 'Se deben implementar reintentos de <u>login</u>/apertura de aplicación, para que los procesos puedan<br>reintentar esta fase del proceso. {a} {O}'],
  [0, 'Utilización de cola/s para los procesos. {a} {O}'],
  [0, '&nbsp;Alertas por correo en caso de error. {a} {P}'],
  [0, '&nbsp;Archivo de configuración del proceso, externo a la carpeta del proyecto. {a} {P}'],
  [0, 'Utilización de la <u>activity</u> de “<u>Comments</u>” para comentar el proceso en lugares críticos o que<br>necesiten alguna explicación relevante. {a} {O}'],
  [0, 'Testeo del desarrollo con diferentes casos de prueba. {a} {O}'],
  [0, 'Incluir <u>delays</u> sólo cuando es estrictamente necesario, no queremos tener un proceso con unos<br>tiempos de espera no optimizados. {a} {O}'],
  [0, 'Reintentos a nivel proceso, para que al fallar 4 veces consecutivas un proceso, se produzca su<br>parada automática. {a} <span class="op">Opcional //<b>FALTA EN EL PERFORMER!!!!!!!!!!!</b></span>'],
  [0, 'Escritura de log en un blog de notas, indicando referencia de caso y fase en la que se encuentra.<br>{a} {P}'],
  [1, '&nbsp;Utilizar al menos un <u>asset</u> en el orquestador. {a} {P}']
].map(([d, t]) => `<note-task${d ? ' done' : ''}>` + t
  .replace('{a}', '<span class="ar">→</span>')
  .replace('{O}', '<span class="ob">Obligatorio</span>')
  .replace('{P}', '<span class="op">Opcional</span>') + '</note-task>').join('');

define('note-canvas', `
  :host { display: block; position: relative; flex: 1; min-width: 0; padding-left: 78px; background: #201f1e; color: #e6e4e2; font: 22px/29px Lato, "Open Sans", sans-serif; white-space: nowrap; }
  .caps { font-size: 20px; }
  u { text-decoration: underline wavy #f00 2px; text-underline-offset: 2px; text-decoration-skip-ink: none; }
  ul { padding: 115px 0 0 24px; }
  li { display: flex; gap: 24px; }
  li::before { content: "•"; width: 10px; }
  h2 { font: 700 30px/40px Lato, "Open Sans", sans-serif; padding-top: 44px; color: #f0eeec; }
  .tasks { margin-left: -42px; }
  .ob { color: #f00; } .op { color: #00873e; }
  .ar { font: 28px/20px "DejaVu Sans", sans-serif; color: #fff; }
  .end { padding-top: 144px; }
  .exp { position: absolute; right: 12px; top: 12px; }
  .handle { position: absolute; left: 4px; top: 381px; }
`, `<p class="caps">NO USAR LA CALCULADORA</p><p>hacer <u>assets</u></p>
<ul><li><span>Nombre Cola -&gt; <u>Contabilidad_Facturas</u></span></li>
<li><span><u>Harcodeo</u> de ruta de <u>Config</u>: <u>Main</u> -&gt; <u>Initialization</u> -&gt; open <u>Workflow</u> <u>InitAllSetting</u> -&gt; <u>Arguments</u></span></li>
<li><span>El cliente debe tener creada la carpeta <u>Vendors</u> en C y <u>endro</u> de <u>Vendors</u> la carpeta Logs</span></li></ul>
<h2>REQUERIMIENTOS</h2><div class="tasks">${TASKS}</div><p class="caps end">TENER EN CUENTA</p>
<button class="exp" type="button" aria-label="Expandir">${ic('expand', 12, 12)}</button><span class="handle">${ic('handle', 23, 19)}</span>`);

define('page-list', `
  :host { display: flex; flex-direction: column; width: 192px; margin-top: -5px; position: relative; background: #262626; color: #ffefc4; font-size: 10px; line-height: 20px; }
  header { display: flex; align-items: center; height: 30px; padding: 0 12px 0 11px; gap: 5px; background: #6e4e00; border-left: 1px solid #c08a00; color: #fff; font-size: 11px; }
  header > :last-child { margin-left: auto; }
  ul { padding-top: 10px; border-left: 1px solid #c08a00; }
  li { height: 20px; padding-left: 12px; }
  .sel { margin: 0 5px 0 -1px; padding-left: 13px; line-height: 18px; border: 1px solid #c08a00; border-left: 0; background: #201f1e; color: #fff; }
  div { flex: 1; border-left: 1px solid #c08a00; }
`, `<header>${ic('addPage', 15, 15)}<button type="button">Agregar página</button>${ic('dot', 6, 6)}</header>
<ul><li>15/06/2023</li><li>Mentoria</li><li>MIRIAM</li><li class="sel">Proyecto</li><li>Mentora Personal</li></ul><div></div>`);

define('onenote-window', `
  :host { display: flex; flex-direction: column; flex: 1; min-height: 0; background: #262626; }
  .top { position: relative; }
  .deco { position: absolute; right: 0; top: 0; }
  .top > :not(.deco) { position: relative; }
  .body { display: flex; flex: 1; min-height: 0; }
`, `<div class="top"><svg class="deco" width="480" height="59" viewBox="0 0 480 59" aria-hidden="true"><g stroke="#303030" stroke-width="2" fill="none"><path d="M0 3l240 8 240 14M0 24h300l180 3M60 31l420-4M70 44L400 0M60 52l310-52M200 51L380 0M250 45L360 0M260 54L440 0M350 0l130 42M310 0l170 26M210 0l100 12"/></g></svg>
<onenote-title></onenote-title><onenote-tabs></onenote-tabs></div>
<onenote-ribbon></onenote-ribbon><section-bar></section-bar><div class="body"><note-canvas></note-canvas><page-list></page-list></div>`);

define('dual-desktop', `
  :host { display: grid; grid-template-columns: 3fr 4fr; height: 100vh; background: #000; }
  section { display: flex; flex-direction: column; min-width: 0; min-height: 0; }
  .a { padding: 80px 0 250px; }
  .b { gap: 7px; }
`, `<section class="a"><edge-window></edge-window><left-taskbar></left-taskbar></section>
<section class="b"><onenote-window></onenote-window><right-taskbar></right-taskbar></section>`);
</script>
</body>
</html>
